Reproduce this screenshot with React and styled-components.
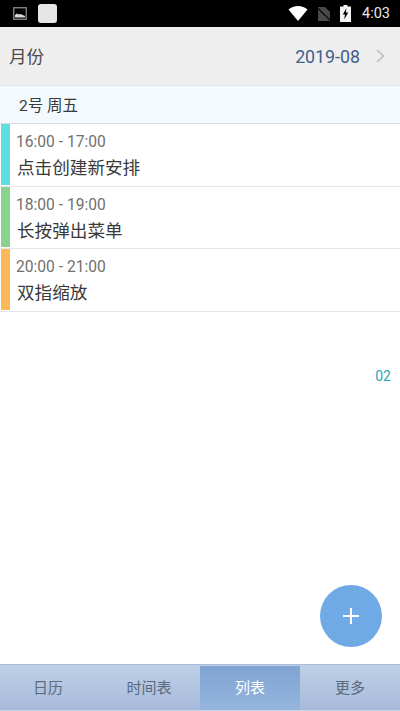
import React from "react";
import styled, { createGlobalStyle } from "styled-components";

const events = [
  { id: 1, time: "16:00 - 17:00", title: "点击创建新安排", color: "#5edde3" },
  { id: 2, time: "18:00 - 19:00", title: "长按弹出菜单", color: "#88d48c" },
  { id: 3, time: "20:00 - 21:00", title: "双指缩放", color: "#fdb858" },
];

const tabs = ["日历", "时间表", "列表", "更多"];

export default function App() {
  return (
    <Screen>
      <GlobalStyle />
      <StatusBar>
        <StatusLeft>
          <svg width="14" height="13" viewBox="0 0 14 13">
            <rect x="0.75" y="0.75" width="12.5" height="11.5" fill="none" stroke="#8a8a8a" strokeWidth="1.3" />
            <path d="M2 10.5V8l2-1.5 2 1 1.5-.5L12 9v1.5z" fill="#d8d8d8" />
          </svg>
          <AppDot />
        </StatusLeft>
        <StatusRight>
          <svg width="20" height="15" viewBox="0 0 20 15">
            <path d="M0.5 3.5C3 1.2 6.4 0 10 0s7 1.2 9.5 3.5L10 15z" fill="#fff" />
          </svg>
          <svg width="14" height="14" viewBox="0 0 14 14">
            <path d="M1 0h7l5 5v9H1z" fill="#4a4a4a" />
            <path d="M0 0.5L14 14" stroke="#000" strokeWidth="1.2" />
          </svg>
          <svg width="11" height="17" viewBox="0 0 11 17">
            <path d="M3.5 0h4v1.5H11V17H0V1.5h3.5z" fill="#f4f4f4" />
            <path d="M6.5 3L2.8 9.5h2.2L4.2 14.5 8.2 7.5H5.8z" fill="#000" />
          </svg>
          <Clock>4:03</Clock>
        </StatusRight>
      </StatusBar>

      <MonthHeader>
        <MonthLabel>月份</MonthLabel>
        <MonthValue>2019-08</MonthValue>
        <svg width="11" height="16" viewBox="0 0 11 16">
          <path d="M2 2l6.5 6L2 14" fill="none" stroke="#c6c6c6" strokeWidth="2" />
        </svg>
      </MonthHeader>

      <DayRow>2号 周五</DayRow>

      <ListArea>
        {events.map((event) => (
          <EventRow key={event.id}>
            <ColorBar $color={event.color} />
            <EventBody>
              <EventTime>{event.time}</EventTime>
              <EventTitle>{event.title}</EventTitle>
            </EventBody>
          </EventRow>
        ))}
        <DayBadge>02</DayBadge>
        <AddButton aria-label="add">
          <svg width="18" height="18" viewBox="0 0 18 18">
            <path d="M9 1v16M1 9h16" stroke="#fff" strokeWidth="2" />
          </svg>
        </AddButton>
      </ListArea>

      <TabBar>
        {tabs.map((tab) => (
          <Tab key={tab} $active={tab === "列表"}>
            {tab}
          </Tab>
        ))}
      </TabBar>
    </Screen>
  );
}

const GlobalStyle = createGlobalStyle`
  html, body {
    margin: 0;
    padding: 0;
    background: #fff;
  }
  body {
    font-family: Roboto, "Noto Sans CJK SC", sans-serif;
  }
`;

const Screen = styled.div`
  width: 400px;
  height: 711px;
  display: flex;
  flex-direction: column;
  overflow: hidden;
  background: #fff;
`;

const StatusBar = styled.div`
  height: 27px;
  flex: none;
  background: #000;
  display: flex;
  align-items: center;
  justify-content: space-between;
  padding: 0 10px 0 13px;
`;

const StatusLeft = styled.div`
  display: flex;
  align-items: center;
  gap: 11px;
`;

const AppDot = styled.div`
  width: 19px;
  height: 19px;
  border-radius: 3px;
  background: #e6e6e6;
`;

const StatusRight = styled.div`
  display: flex;
  align-items: center;
  gap: 9px;
`;

const Clock = styled.span`
  color: #e8e8e8;
  font-size: 14.5px;
  margin-left: 2px;
`;

const MonthHeader = styled.div`
  height: 58px;
  flex: none;
  background: #eeeeee;
  border-bottom: 1px solid #e2e6ea;
  display: flex;
  align-items: center;
  padding: 0 14px 0 9px;
`;

const MonthLabel = styled.span`
  flex: 1;
  font-size: 17.5px;
  color: #4a4a4a;
  padding-bottom: 1px;
`;

const MonthValue = styled.span`
  font-size: 17.8px;
  color: #3f5f8f;
  margin-right: 15px;
`;

const DayRow = styled.div`
  height: 38px;
  flex: none;
  box-sizing: border-box;
  background: #f4f9fd;
  border-bottom: 1px solid #d9dcdf;
  display: flex;
  align-items: center;
  padding: 0 0 2px 19px;
  font-size: 15.5px;
  color: #3a3a3a;
`;

const ListArea = styled.div`
  flex: 1;
  position: relative;
`;

const EventRow = styled.div`
  height: 62.5px;
  box-sizing: border-box;
  display: flex;
  gap: 6px;
  padding: 0 0 1px 1px;
  border-bottom: 1px solid #e6e6e6;
`;

const ColorBar = styled.div`
  width: 9px;
  background: ${(props) => props.$color};
`;

const EventBody = styled.div`
  display: flex;
  flex-direction: column;
  padding-top: 8px;
`;

const EventTime = styled.div`
  font-size: 15.6px;
  line-height: 20px;
  color: #707070;
`;

const EventTitle = styled.div`
  font-size: 17.6px;
  line-height: 32px;
  color: #3a3a3a;
  padding-left: 1px;
`;

const DayBadge = styled.span`
  position: absolute;
  top: 244px;
  right: 9px;
  font-size: 14px;
  color: #2aa5b5;
`;

const AddButton = styled.button`
  position: absolute;
  right: 18px;
  bottom: 17.5px;
  width: 62px;
  height: 62px;
  border: none;
  border-radius: 50%;
  padding: 0;
  background: #6fa9e6;
  display: flex;
  align-items: center;
  justify-content: center;
`;

const TabBar = styled.div`
  height: 47px;
  flex: none;
  box-sizing: border-box;
  display: flex;
  border-top: 1px solid #a9bbd6;
  border-bottom: 1px solid #c5d3e8;
  background: linear-gradient(#bfd0e8, #a6bad9);
`;

const Tab = styled.div`
  flex: 0 0 25%;
  box-sizing: border-box;
  display: flex;
  align-items: center;
  justify-content: center;
  padding-bottom: 3px;
  font-size: 15px;
  color: ${(props) => (props.$active ? "#fff" : "#5c6a7c")};
  background: ${(props) =>
    props.$active ? "linear-gradient(#7fa3d2, #95b5de)" : "none"};
  margin-top: ${(props) => (props.$active ? "1px" : "0")};

  &:nth-child(1) {
    padding-right: 4px;
  }
  &:nth-child(2) {
    padding-right: 2px;
  }
`;
